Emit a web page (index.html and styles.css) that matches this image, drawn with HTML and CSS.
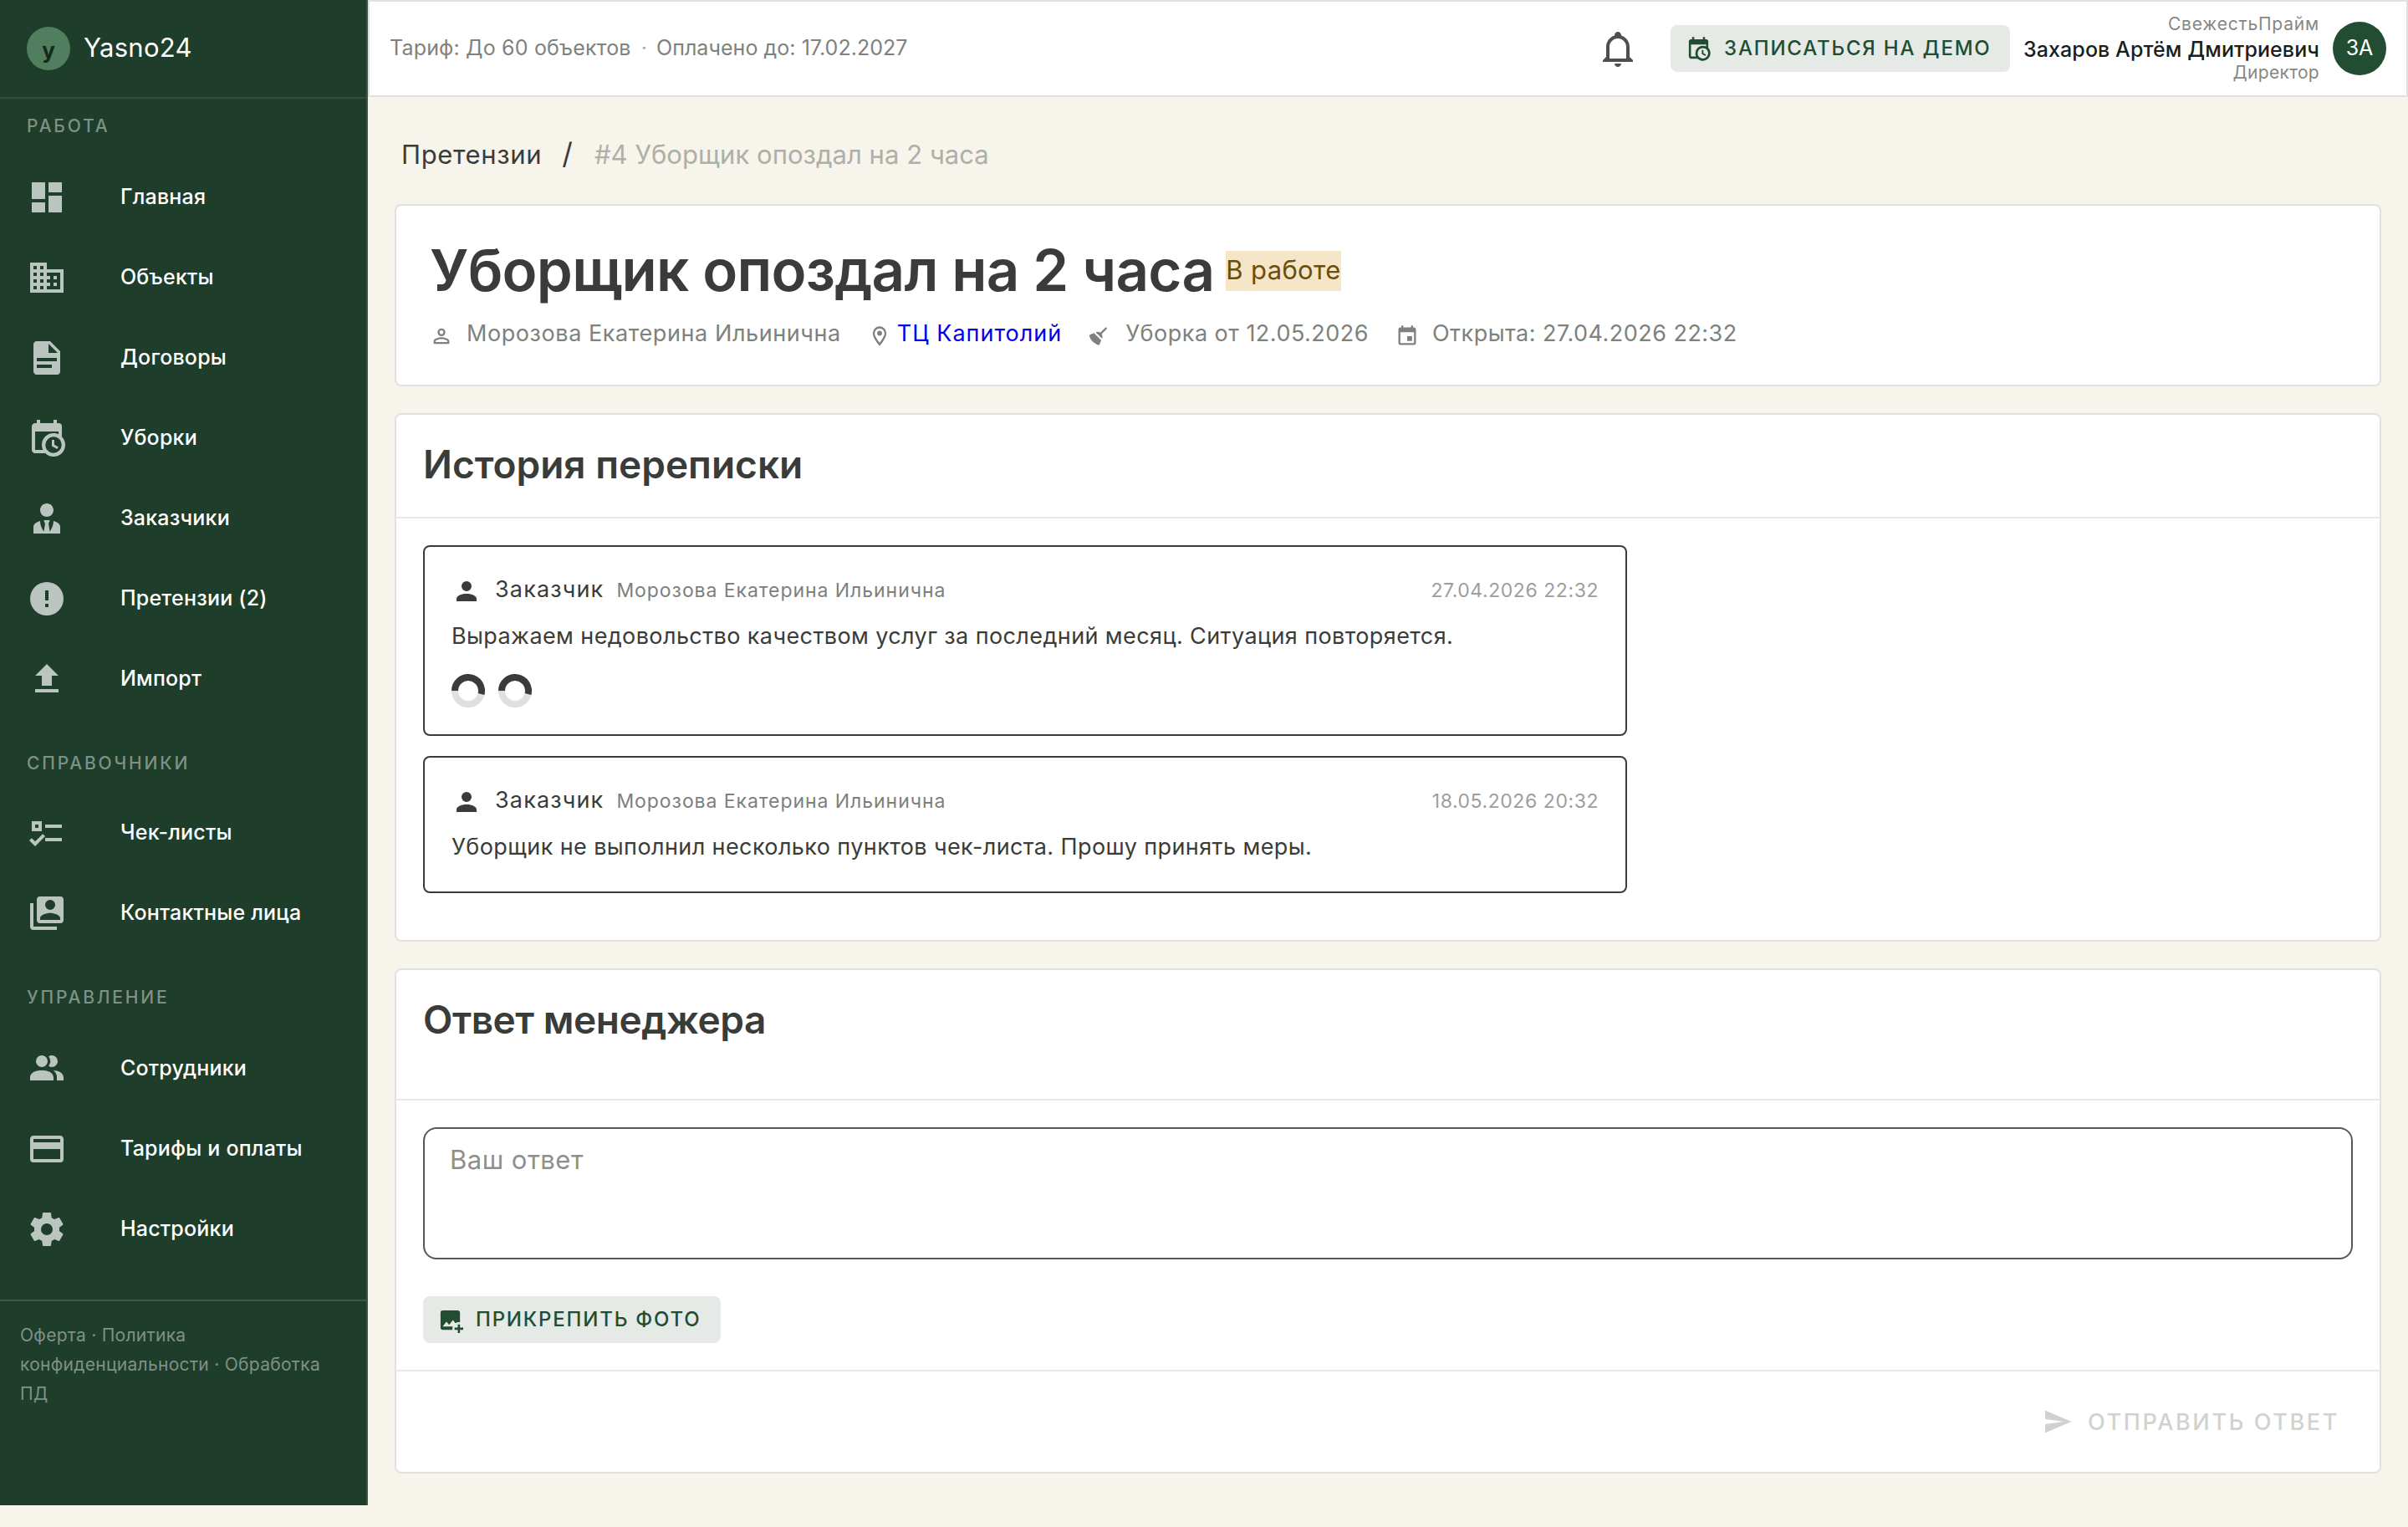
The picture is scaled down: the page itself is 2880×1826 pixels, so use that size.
FILE: index.html
```html
<!DOCTYPE html>
<html lang="ru">
  <head>
    <meta charset="UTF-8" />
    <meta name="viewport" content="width=device-width, initial-scale=1.0" />
    <title>Yasno24</title>
    <link rel="stylesheet" href="styles.css">
  </head>

  <body>
    <aside class="sidebar">
      <div class="brand">
        <div class="brand-logo"><span>y</span></div>
        <span class="brand-name">Yasno24</span>
      </div>

      <nav>
        <div class="nav-label first">РАБОТА</div>
        <a class="nav-item">
          <svg viewBox="0 0 24 24"><path d="M13,3V9H21V3M13,21H21V11H13M3,21H11V15H3M3,13H11V3H3V13Z" /></svg>
          <span>Главная</span>
        </a>
        <a class="nav-item">
          <svg viewBox="0 0 24 24"><path d="M18,15H16V17H18M18,11H16V13H18M20,19H12V17H14V15H12V13H14V11H12V9H20M10,7H8V5H10M10,11H8V9H10M10,15H8V13H10M10,19H8V17H10M6,7H4V5H6M6,11H4V9H6M6,15H4V13H6M6,19H4V17H6M12,7V3H2V21H22V7H12Z" /></svg>
          <span>Объекты</span>
        </a>
        <a class="nav-item">
          <svg viewBox="0 0 24 24"><path d="M13,9H18.5L13,3.5V9M6,2H14L20,8V20A2,2 0 0,1 18,22H6C4.89,22 4,21.1 4,20V4C4,2.89 4.89,2 6,2M15,18V16H6V18H15M18,14V12H6V14H18Z" /></svg>
          <span>Договоры</span>
        </a>
        <a class="nav-item">
          <svg viewBox="0 0 24 24"><path d="M15,13H16.5V15.82L18.94,17.23L18.19,18.53L15,16.69V13M19,8H5V19H9.67C9.24,18.09 9,17.07 9,16A7,7 0 0,1 16,9C17.07,9 18.09,9.24 19,9.67V8M5,21C3.89,21 3,20.1 3,19V5C3,3.89 3.89,3 5,3H6V1H8V3H16V1H18V3H19A2,2 0 0,1 21,5V11.1C22.24,12.36 23,14.09 23,16A7,7 0 0,1 16,23C14.09,23 12.36,22.24 11.1,21H5M16,11.15A4.85,4.85 0 0,0 11.15,16C11.15,18.68 13.32,20.85 16,20.85A4.85,4.85 0 0,0 20.85,16C20.85,13.32 18.68,11.15 16,11.15Z" /></svg>
          <span>Уборки</span>
        </a>
        <a class="nav-item">
          <svg viewBox="0 0 24 24"><path d="M12 3C14.21 3 16 4.79 16 7S14.21 11 12 11 8 9.21 8 7 9.79 3 12 3M16 13.54C16 14.6 15.72 17.07 13.81 19.83L13 15L13.94 13.12C13.32 13.05 12.67 13 12 13S10.68 13.05 10.06 13.12L11 15L10.19 19.83C8.28 17.07 8 14.6 8 13.54C5.61 14.24 4 15.5 4 17V21H20V17C20 15.5 18.4 14.24 16 13.54Z" /></svg>
          <span>Заказчики</span>
        </a>
        <a class="nav-item">
          <svg viewBox="0 0 24 24"><path d="M13,13H11V7H13M13,17H11V15H13M12,2A10,10 0 0,0 2,12A10,10 0 0,0 12,22A10,10 0 0,0 22,12A10,10 0 0,0 12,2Z" /></svg>
          <span>Претензии (2)</span>
        </a>
        <a class="nav-item">
          <svg viewBox="0 0 24 24"><path d="M9,16V10H5L12,3L19,10H15V16H9M5,20V18H19V20H5Z" /></svg>
          <span>Импорт</span>
        </a>

        <div class="nav-label">СПРАВОЧНИКИ</div>
        <a class="nav-item">
          <svg viewBox="0 0 24 24"><path d="M3,5H9V11H3V5M5,7V9H7V7H5M11,7H21V9H11V7M11,15H21V17H11V15M5,20L1.5,16.5L2.91,15.09L5,17.17L9.59,12.59L11,14L5,20Z" /></svg>
          <span>Чек-листы</span>
        </a>
        <a class="nav-item">
          <svg viewBox="0 0 24 24"><path d="M4,6H2V20A2,2 0 0,0 4,22H18V20H4V6M20,2A2,2 0 0,1 22,4V16A2,2 0 0,1 20,18H8A2,2 0 0,1 6,16V4A2,2 0 0,1 8,2H20M17,7A3,3 0 0,0 14,4A3,3 0 0,0 11,7A3,3 0 0,0 14,10A3,3 0 0,0 17,7M8,15V16H20V15C20,13 16,11.9 14,11.9C12,11.9 8,13 8,15Z" /></svg>
          <span>Контактные лица</span>
        </a>

        <div class="nav-label last">УПРАВЛЕНИЕ</div>
        <a class="nav-item">
          <svg viewBox="0 0 24 24"><path d="M16 17V19H2V17S2 13 9 13 16 17 16 17M12.5 7.5A3.5 3.5 0 1 0 9 11A3.5 3.5 0 0 0 12.5 7.5M15.94 13A5.32 5.32 0 0 1 18 17V19H22V17S22 13.37 15.94 13M15 4A3.39 3.39 0 0 0 13.07 4.59A5 5 0 0 1 13.07 10.41A3.39 3.39 0 0 0 15 11A3.5 3.5 0 0 0 15 4Z" /></svg>
          <span>Сотрудники</span>
        </a>
        <a class="nav-item">
          <svg viewBox="0 0 24 24"><path d="M20,8H4V6H20M20,18H4V12H20M20,4H4C2.89,4 2,4.89 2,6V18A2,2 0 0,0 4,20H20A2,2 0 0,0 22,18V6C22,4.89 21.1,4 20,4Z" /></svg>
          <span>Тарифы и оплаты</span>
        </a>
        <a class="nav-item">
          <svg viewBox="0 0 24 24"><path d="M12,15.5A3.5,3.5 0 0,1 8.5,12A3.5,3.5 0 0,1 12,8.5A3.5,3.5 0 0,1 15.5,12A3.5,3.5 0 0,1 12,15.5M19.43,12.97C19.47,12.65 19.5,12.33 19.5,12C19.5,11.67 19.47,11.34 19.43,11L21.54,9.37C21.73,9.22 21.78,8.95 21.66,8.73L19.66,5.27C19.54,5.05 19.27,4.96 19.05,5.05L16.56,6.05C16.04,5.66 15.5,5.32 14.87,5.07L14.5,2.42C14.46,2.18 14.25,2 14,2H10C9.75,2 9.54,2.18 9.5,2.42L9.13,5.07C8.5,5.32 7.96,5.66 7.44,6.05L4.95,5.05C4.73,4.96 4.46,5.05 4.34,5.27L2.34,8.73C2.21,8.95 2.27,9.22 2.46,9.37L4.57,11C4.53,11.34 4.5,11.67 4.5,12C4.5,12.33 4.53,12.65 4.57,12.97L2.46,14.63C2.27,14.78 2.21,15.05 2.34,15.27L4.34,18.73C4.46,18.95 4.73,19.03 4.95,18.95L7.44,17.94C7.96,18.34 8.5,18.68 9.13,18.93L9.5,21.58C9.54,21.82 9.75,22 10,22H14C14.25,22 14.46,21.82 14.5,21.58L14.87,18.93C15.5,18.67 16.04,18.34 16.56,17.94L19.05,18.95C19.27,19.03 19.54,18.95 19.66,18.73L21.66,15.27C21.78,15.05 21.73,14.78 21.54,14.63L19.43,12.97Z" /></svg>
          <span>Настройки</span>
        </a>
      </nav>

      <div class="legal">Оферта · Политика конфиденциальности · Обработка ПД</div>
    </aside>

    <div class="page">
      <header class="topbar">
        <div class="tariff">
          <span>Тариф: До 60 объектов</span><span class="dot">·</span><span class="paid">Оплачено до: 17.02.2027</span>
        </div>
        <svg class="bell" viewBox="0 0 24 24"><path d="M10 21H14C14 22.1 13.1 23 12 23S10 22.1 10 21M21 19V20H3V19L5 17V11C5 7.9 7.03 5.17 10 4.29C10 4.19 10 4.1 10 4C10 2.9 10.9 2 12 2S14 2.9 14 4C14 4.1 14 4.19 14 4.29C16.97 5.17 19 7.9 19 11V17L21 19M17 11C17 8.24 14.76 6 12 6S7 8.24 7 11V18H17V11Z" /></svg>
        <button class="btn-tonal btn-demo">
          <svg viewBox="0 0 24 24"><path d="M15,13H16.5V15.82L18.94,17.23L18.19,18.53L15,16.69V13M19,8H5V19H9.67C9.24,18.09 9,17.07 9,16A7,7 0 0,1 16,9C17.07,9 18.09,9.24 19,9.67V8M5,21C3.89,21 3,20.1 3,19V5C3,3.89 3.89,3 5,3H6V1H8V3H16V1H18V3H19A2,2 0 0,1 21,5V11.1C22.24,12.36 23,14.09 23,16A7,7 0 0,1 16,23C14.09,23 12.36,22.24 11.1,21H5M16,11.15A4.85,4.85 0 0,0 11.15,16C11.15,18.68 13.32,20.85 16,20.85A4.85,4.85 0 0,0 20.85,16C20.85,13.32 18.68,11.15 16,11.15Z" /></svg>
          <span>ЗАПИСАТЬСЯ НА ДЕМО</span>
        </button>
        <div class="user">
          <div class="user-company">СвежестьПрайм</div>
          <div class="user-name">Захаров Артём Дмитриевич</div>
          <div class="user-role">Директор</div>
        </div>
        <div class="avatar"><span>ЗА</span></div>
      </header>

      <main>
        <div class="breadcrumbs">
          <a>Претензии</a><span class="slash">/</span><span class="current">#4 Уборщик опоздал на 2 часа</span>
        </div>

        <section class="card claim">
          <div class="claim-title">
            <h1>Уборщик опоздал на 2 часа</h1>
            <span class="badge">В работе</span>
          </div>
          <div class="meta">
            <div class="meta-item">
              <svg viewBox="0 0 24 24"><path d="M12,4A4,4 0 0,1 16,8A4,4 0 0,1 12,12A4,4 0 0,1 8,8A4,4 0 0,1 12,4M12,6A2,2 0 0,0 10,8A2,2 0 0,0 12,10A2,2 0 0,0 14,8A2,2 0 0,0 12,6M12,13C14.67,13 20,14.33 20,17V20H4V17C4,14.33 9.33,13 12,13M12,14.9C9.03,14.9 5.9,16.36 5.9,17V18.1H18.1V17C18.1,16.36 14.97,14.9 12,14.9Z" /></svg>
              <span class="person">Морозова Екатерина Ильинична</span>
            </div>
            <div class="meta-item place">
              <svg viewBox="0 0 24 24"><path d="M12,6.5A2.5,2.5 0 0,1 14.5,9A2.5,2.5 0 0,1 12,11.5A2.5,2.5 0 0,1 9.5,9A2.5,2.5 0 0,1 12,6.5M12,2A7,7 0 0,1 19,9C19,14.25 12,22 12,22C12,22 5,14.25 5,9A7,7 0 0,1 12,2M12,4A5,5 0 0,0 7,9C7,10 7,12 12,18.71C17,12 17,10 17,9A5,5 0 0,0 12,4Z" /></svg>
              <a href="#">ТЦ Капитолий</a>
            </div>
            <div class="meta-item cleaning">
              <svg viewBox="0 0 24 24"><path d="M19.36,2.72L20.78,4.14L15.06,9.85C16.13,11.39 16.28,13.24 15.38,14.44L9.06,8.12C10.26,7.22 12.11,7.37 13.65,8.44L19.36,2.72M5.93,17.57C3.92,15.56 2.69,13.16 2.35,10.92L7.23,8.83L14.67,16.27L12.58,21.15C10.34,20.81 7.94,19.58 5.93,17.57Z" /></svg>
              <span>Уборка от 12.05.2026</span>
            </div>
            <div class="meta-item">
              <svg viewBox="0 0 24 24"><path d="M19,19H5V8H19M16,1V3H8V1H6V3H5C3.89,3 3,3.89 3,5V19A2,2 0 0,0 5,21H19A2,2 0 0,0 21,19V5C21,3.89 20.1,3 19,3H18V1M17,12H12V17H17V12Z" /></svg>
              <span>Открыта: 27.04.2026 22:32</span>
            </div>
          </div>
        </section>

        <section class="card">
          <div class="card-head">
            <h2>История переписки</h2>
          </div>
          <div class="thread">
            <article class="message">
              <div class="message-head">
                <svg viewBox="0 0 24 24"><path d="M12,4A4,4 0 0,1 16,8A4,4 0 0,1 12,12A4,4 0 0,1 8,8A4,4 0 0,1 12,4M12,14C16.42,14 20,15.79 20,18V20H4V18C4,15.79 7.58,14 12,14Z" /></svg>
                <span class="role">Заказчик</span>
                <span class="author">Морозова Екатерина Ильинична</span>
                <time>27.04.2026 22:32</time>
              </div>
              <p>Выражаем недовольство качеством услуг за последний месяц. Ситуация повторяется.</p>
              <div class="loaders">
                <svg viewBox="0 0 40 40"><circle class="track" cx="20" cy="20" r="16" /><path d="M4 20A16 16 0 1 1 35.5 24" /></svg>
                <svg viewBox="0 0 40 40"><circle class="track" cx="20" cy="20" r="16" /><path d="M4 20A16 16 0 1 1 35.5 24" /></svg>
              </div>
            </article>
            <article class="message">
              <div class="message-head">
                <svg viewBox="0 0 24 24"><path d="M12,4A4,4 0 0,1 16,8A4,4 0 0,1 12,12A4,4 0 0,1 8,8A4,4 0 0,1 12,4M12,14C16.42,14 20,15.79 20,18V20H4V18C4,15.79 7.58,14 12,14Z" /></svg>
                <span class="role">Заказчик</span>
                <span class="author">Морозова Екатерина Ильинична</span>
                <time>18.05.2026 20:32</time>
              </div>
              <p>Уборщик не выполнил несколько пунктов чек-листа. Прошу принять меры.</p>
            </article>
          </div>
        </section>

        <section class="card">
          <div class="card-head card-head-tall">
            <h2 class="reply-title">Ответ менеджера</h2>
          </div>
          <form class="reply">
            <textarea placeholder="Ваш ответ"></textarea>
            <button type="button" class="btn-tonal btn-attach">
              <svg viewBox="0 0 24 24"><path d="M5,3A2,2 0 0,0 3,5V19A2,2 0 0,0 5,21H14.09C14.03,20.67 14,20.34 14,20C14,19.32 14.12,18.64 14.35,18H5L8.5,13.5L11,16.5L14.5,12L16.73,14.97C17.7,14.34 18.84,14 20,14C20.34,14 20.67,14.03 21,14.09V5C21,3.89 20.1,3 19,3H5M19,16V19H16V21H19V24H21V21H24V19H21V16H19Z" /></svg>
              <span>ПРИКРЕПИТЬ ФОТО</span>
            </button>
          </form>
          <div class="card-actions">
            <button class="btn-send" disabled>
              <svg viewBox="0 0 24 24"><path d="M2,21L23,12L2,3V10L17,12L2,14V21Z" /></svg>
              <span>ОТПРАВИТЬ ОТВЕТ</span>
            </button>
          </div>
        </section>
      </main>
    </div>
  </body>
</html>
```
FILE: styles.css
```css
* {
  box-sizing: border-box;
}

body {
  margin: 0;
  display: flex;
  align-items: flex-start;
  min-height: 1826px;
  background-color: #f7f4ec;
  color: #3a3c39;
  font-family: Inter, "Open Sans", sans-serif;
}

h1,
h2,
p {
  margin: 0;
}

svg {
  display: block;
  flex-shrink: 0;
  fill: currentColor;
}

button {
  border: none;
  padding: 0;
  font-family: inherit;
  cursor: pointer;
}

/* sidebar */
.sidebar {
  width: 440px;
  height: 1800px;
  flex-shrink: 0;
  background-color: #1e3d2b;
  border-right: 2px solid #3d5747;
  color: #fff;
}

.brand {
  display: flex;
  align-items: center;
  gap: 16px;
  height: 118px;
  padding-left: 32px;
  border-bottom: 2px solid #2f4d3b;
}

.brand-logo {
  display: flex;
  align-items: center;
  justify-content: center;
  width: 52px;
  height: 52px;
  border-radius: 50%;
  background-color: #517e5f;
  color: #12291b;
  font-size: 26px;
  font-weight: 700;
}

.brand-logo span {
  padding-top: 4px;
}

.brand-name {
  padding-bottom: 3px;
  font-size: 31px;
  letter-spacing: 0.25px;
}

.nav-label {
  height: 88px;
  padding: 42px 0 0 32px;
  color: #7f9186;
  font-size: 21px;
  font-weight: 500;
  line-height: 22px;
  letter-spacing: 2.8px;
}

.nav-label.first {
  height: 70px;
  padding-top: 22px;
}

.nav-label.last {
  height: 90px;
}

.nav-item {
  display: flex;
  align-items: center;
  gap: 64px;
  height: 96px;
  padding-left: 32px;
  font-size: 25px;
  font-weight: 500;
  letter-spacing: 0.2px;
}

.nav-item span {
  padding-bottom: 2px;
}

.nav-item svg {
  width: 48px;
  height: 48px;
  color: #bbc5bf;
}

.legal {
  margin-top: 36px;
  padding: 23px 24px 0;
  border-top: 2px solid #3d5747;
  color: #7f9186;
  font-size: 21px;
  line-height: 35.2px;
  letter-spacing: 0.29px;
}

/* top bar */
.page {
  flex: 1;
}

.topbar {
  display: flex;
  align-items: center;
  height: 116px;
  padding: 0 24px;
  background-color: #fff;
  border: 2px solid #dfe0e0;
}

.tariff {
  margin-right: auto;
  padding-bottom: 2px;
  color: #7d827c;
  font-size: 25px;
  letter-spacing: 0.17px;
}

.tariff .dot {
  margin: 0 11px 0 12px;
  color: #a9aca8;
}

.tariff .paid {
  letter-spacing: 0.05px;
}

.bell {
  width: 48px;
  height: 48px;
  margin-right: 39px;
  color: #4d514c;
}

.btn-tonal {
  display: flex;
  align-items: center;
  height: 56px;
  border-radius: 8px;
  background-color: #e5eae6;
  color: #234d33;
  font-size: 24px;
  font-weight: 450;
  letter-spacing: 1.8px;
}

.btn-tonal svg {
  width: 31px;
  height: 31px;
}

.btn-tonal span {
  padding-bottom: 1px;
}

.btn-demo {
  gap: 15px;
  width: 406px;
  margin-right: 16px;
  padding-left: 18px;
}

.user {
  padding-bottom: 3px;
  text-align: right;
  color: #858884;
  font-size: 21px;
}

.user-company {
  line-height: 28px;
  letter-spacing: 0.8px;
}

.user-name {
  color: #1c1e1b;
  font-size: 25px;
  font-weight: 500;
  line-height: 32px;
  letter-spacing: 0.08px;
}

.user-role {
  line-height: 24px;
  letter-spacing: 0.3px;
}

.avatar {
  display: flex;
  align-items: center;
  justify-content: center;
  width: 64px;
  height: 64px;
  margin-left: 16px;
  border-radius: 50%;
  background-color: #234d33;
  color: #fff;
  font-size: 25px;
}

.avatar span {
  padding-bottom: 2px;
}

/* content */
main {
  padding: 49px 32px 0;
}

.breadcrumbs {
  height: 79px;
  padding-left: 8px;
  font-size: 31px;
  line-height: 40px;
}

.breadcrumbs a {
  letter-spacing: 0.65px;
}

.breadcrumbs .slash {
  margin: 0 26px 0 24px;
  font-size: 35px;
  line-height: 36px;
}

.breadcrumbs .current {
  color: #aeafa8;
  letter-spacing: 0.05px;
}

.card {
  margin-bottom: 32px;
  background-color: #fff;
  border: 2px solid #dfe0df;
  border-radius: 8px;
}

.claim {
  padding: 35px 40px 41px;
}

.claim-title {
  display: flex;
  align-items: center;
  gap: 14px;
}

h1 {
  font-size: 69px;
  font-weight: 600;
  line-height: 84px;
  letter-spacing: -0.75px;
}

.badge {
  height: 48px;
  margin-top: 2px;
  background-color: #f5e6c8;
  color: #6b4e0a;
  font-size: 31px;
  line-height: 45px;
  letter-spacing: 0.35px;
}

.meta {
  display: flex;
  gap: 32px;
  margin-top: 14px;
  color: #7d827c;
  font-size: 27px;
  line-height: 40px;
  letter-spacing: 0.48px;
}

.meta-item {
  display: flex;
  align-items: center;
  gap: 16px;
}

.meta-item svg {
  width: 28px;
  height: 28px;
  margin-top: 6px;
}

.meta-item .person {
  letter-spacing: 0.58px;
}

.meta-item.place {
  gap: 7px;
}

.meta-item.cleaning {
  gap: 18px;
  margin-left: -2px;
}

.place a {
  color: #0000ee;
  letter-spacing: 1px;
  text-decoration: none;
}

.card-head {
  height: 124px;
  padding: 29px 32px 0;
  border-bottom: 2px solid #e8e8e7;
}

.card-head-tall {
  height: 156px;
}

h2 {
  font-size: 46px;
  font-weight: 600;
  line-height: 60px;
}

.reply-title {
  letter-spacing: -0.45px;
}

.thread {
  display: flex;
  flex-direction: column;
  gap: 24px;
  padding: 32px 32px 56px;
}

.message {
  width: 1440px;
  min-height: 164px;
  padding: 31px 32px 32px;
  border: 2px solid #3a3c39;
  border-radius: 8px;
  font-size: 27px;
  line-height: 40px;
}

.message-head {
  display: flex;
  align-items: baseline;
  height: 40px;
  margin-bottom: 16px;
}

.message-head svg {
  align-self: center;
  width: 36px;
  height: 36px;
  margin: 3px 16px 0 0;
}

.message-head .role {
  letter-spacing: 1.15px;
}

.message-head .author {
  margin-left: 15px;
  color: #7d7f7c;
  font-size: 23px;
  letter-spacing: 0.94px;
}

.message-head time {
  margin-left: auto;
  color: #9d9e9c;
  font-size: 23px;
  letter-spacing: 0.56px;
}

.message p {
  letter-spacing: 0.4px;
}

.loaders {
  display: flex;
  gap: 16px;
  margin-top: 25px;
}

.loaders svg {
  width: 40px;
  height: 40px;
  fill: none;
  stroke: #3a3c39;
  stroke-width: 8;
}

.loaders .track {
  stroke: #e0e0e0;
}

.reply {
  padding: 32px;
}

.reply textarea {
  display: block;
  width: 100%;
  height: 158px;
  margin-bottom: 44px;
  padding: 17px 30px;
  border: 2px solid #575957;
  border-radius: 16px;
  background-color: #fff;
  font-family: inherit;
  font-size: 31px;
  line-height: 40px;
  letter-spacing: 0.49px;
  resize: none;
}

.reply textarea::placeholder {
  color: #8e8f8d;
}

.btn-attach {
  gap: 15px;
  width: 356px;
  padding-left: 17px;
}

.card-actions {
  display: flex;
  align-items: center;
  justify-content: flex-end;
  height: 122px;
  padding-right: 48px;
  border-top: 2px solid #e8e8e7;
}

.btn-send {
  display: flex;
  align-items: center;
  gap: 18px;
  background: none;
  color: #d0d2d0;
  font-size: 27px;
  font-weight: 450;
  letter-spacing: 2.62px;
}

.btn-send svg {
  width: 36px;
  height: 36px;
}
```
